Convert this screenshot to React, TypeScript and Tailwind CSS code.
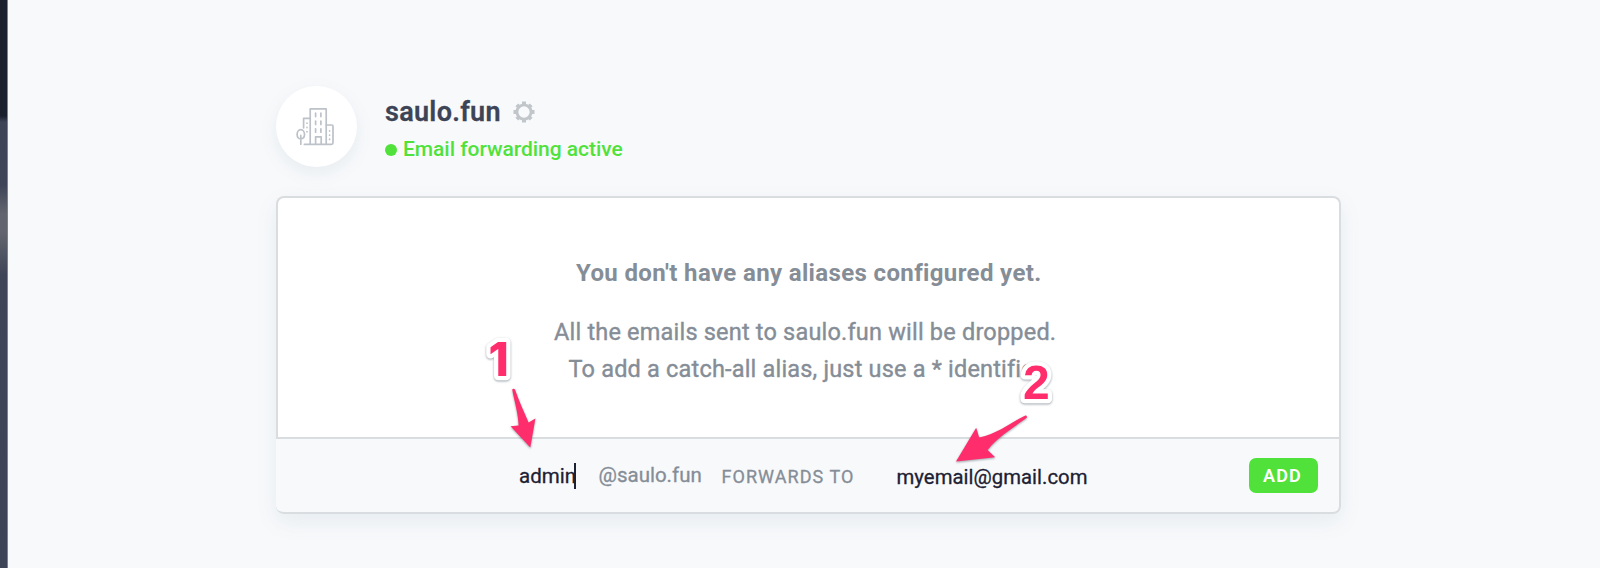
function BuildingIcon() {
  return (
    <svg width="44" height="44" viewBox="0 0 44 44" fill="none" stroke="#bdc2c9" strokeWidth="1.7" strokeLinecap="round" strokeLinejoin="round">
      <path d="M15.2 38.8V3.8h16v35" />
      <path d="M15 13.4H8.6v9.4" />
      <path d="M31.2 20h5.6a1.2 1.2 0 0 1 1.2 1.2v16.4a1.8 1.8 0 0 1-1.8 1.8H9.4" />
      <path d="M20.6 39v-7.2h5.6V39" />
      <path d="M20.6 8.2v3.4M25.9 8.2v3.4M20.6 16v3.4M25.9 16v3.4M20.6 23.8v3.4M25.9 23.8v3.4" />
      <path d="M12 18v.2M12 22.4v.2M12 26.6v.2M34.6 25.8v.2M34.6 30v.2M34.6 34.2v.2" />
      <path d="M5.8 39.2V30.4M5.8 24.6c2.3 0 3.7 2.4 3.7 5s-1.5 4.3-3.7 4.3-3.700-1.700-3.700-4.300 1.400-5 3.700-5z" />
    </svg>
  );
}

function GearIcon() {
  return (
    <svg width="22" height="22" viewBox="-11 -11 22 22" fill="none" stroke="#c1c6cb">
      <circle r="7.1" strokeWidth="2.9" />
      <path
        strokeWidth="4"
        d="M0-7.500V-10.500M0 7.500V10.500M-7.500 0H-10.500M7.500 0H10.500M5.300-5.300L7.200-7.200M5.300 5.300L7.200 7.200M-5.300 5.300L-7.200 7.200M-5.300-5.300L-7.200-7.200"
      />
    </svg>
  );
}

function Annotations() {
  return (
    <svg className="pointer-events-none absolute left-0 top-0" width="1600" height="568" viewBox="0 0 1600 568">
      <g className="[filter:drop-shadow(0_1.5px_1px_rgba(60,75,90,0.5))]" fill="#ff2d6c">
        <path d="M512.200 389.600Q513.600 388 515 389.600C518.500 400 524 412 528.600 422.600L535.400 418.400L530.300 447.400L510.600 426.200L518.600 425.600C518.300 414 514.500 402 512.200 389.600Z" />
        <path d="M1025.400 415.600Q1027.400 415.600 1026.800 417.800C1013 428 999 436 987.600 450L995.200 457.300L956 461.600L976.200 427.800L979.200 437.600C997 434 1010 423 1025.400 415.600Z" />
      </g>
      <g
        className="[filter:drop-shadow(0_1.5px_1px_rgba(60,75,90,0.5))] [paint-order:stroke]"
        fill="#ff2d6c"
        stroke="#fff"
        strokeWidth="8.500"
        strokeLinejoin="round"
      >
        <text x="488.500" y="375.500" className="font-['Inter'] text-[46px] font-extrabold">1</text>
        <text x="1023" y="399" className="font-['Liberation_Sans'] text-[48px] font-bold">2</text>
      </g>
    </svg>
  );
}

export default function App() {
  return (
    <div className="relative flex h-[568px] w-[1600px] overflow-hidden bg-[#f8f9fb] font-['Roboto',sans-serif]">
      <div className="w-[7px] shrink-0 bg-[linear-gradient(180deg,#1b202f_0px,#1b202f_116px,#3e4457_122px,#3f4558_185px,#62656f_214px,#62656f_232px,#3f4558_275px,#3e4457_568px)]" />
      <div className="w-px shrink-0 bg-[#7d828c]" />

      <main className="flex flex-1 flex-col pl-[268px] pt-[86px]">
        <header className="flex h-[110px]">
          <div className="flex size-[81px] items-center justify-center rounded-full bg-white shadow-[0_6px_18px_rgba(60,110,130,0.09)]">
            <BuildingIcon />
          </div>
          <div className="pl-[28px] pt-[10px]">
            <div className="flex h-[32px] items-center">
              <h1 className="text-[27px] font-semibold leading-[32px] tracking-[0.3px] text-[#3d4456] [-webkit-text-stroke:0.3px_#3d4456]">saulo.fun</h1>
              <div className="ml-[12px]">
                <GearIcon />
              </div>
            </div>
            <div className="mt-[7px] flex h-[26px] items-center text-[#50e23b]">
              <span className="mt-[3px] size-[12px] rounded-full bg-[#50e23b]" />
              <span className="ml-[6px] mt-[2px] text-[21px] font-medium leading-[26px] tracking-[-0.04px]">Email forwarding active</span>
            </div>
          </div>
        </header>

        <section className="flex h-[318px] w-[1065px] flex-col rounded-[8px] shadow-[0_8px_22px_rgba(60,110,130,0.09)]">
          <div className="flex h-[241px] flex-col rounded-t-[8px] border-2 border-b-0 border-[#d9dde0] bg-white text-[#858d97]">
            <p className="pl-[298px] pt-[60px] text-[24px] font-bold leading-[30px] tracking-[0.36px]">
              You don&apos;t have any aliases configured yet.
            </p>
            <div className="pt-[26px] text-[23.5px] leading-[37px] [-webkit-text-stroke:0.4px_#858d97]">
              <p className="pl-[276px] tracking-[0.2px]">All the emails sent to saulo.fun will be dropped.</p>
              <p className="pl-[290.500px] tracking-[0.19px]">To add a catch-all alias, just use a * identifier</p>
            </div>
          </div>
          <div className="flex h-[77px] items-center rounded-b-[8px] border-2 border-l-0 border-[#d9dde0] bg-[#f8f9fb] pl-[243px] pr-[21px]">
            <div className="mt-[1px] flex w-[57px]">
              <span className="text-[20.5px] leading-[26px] text-[#1c2133] [-webkit-text-stroke:0.3px_#1c2133]">admin</span>
              <span className="-ml-[2px] h-[26px] w-[2px] shrink-0 bg-[#1c2133]" />
            </div>
            <span className="ml-[22.500px] w-[123px] pb-[2px] text-[20.5px] leading-[26px] text-[#858d97] [-webkit-text-stroke:0.3px_#858d97]">
              @saulo.fun
            </span>
            <span className="mt-[2px] w-[175px] text-[18px] leading-[26px] tracking-[1.050px] text-[#858d97] [-webkit-text-stroke:0.3px_#858d97]">FORWARDS TO</span>
            <span className="mt-[2px] text-[20.3px] leading-[26px] tracking-[0.040px] text-[#1c2133] [-webkit-text-stroke:0.3px_#1c2133]">myemail@gmail.com</span>
            <button className="mb-[1px] ml-auto flex h-[35px] w-[69px] items-center justify-center rounded-[7px] bg-[#50e23b] pr-[2px] text-[18px] font-semibold tracking-[1.200px] text-white">
              ADD
            </button>
          </div>
        </section>
      </main>

      <Annotations />
    </div>
  );
}
